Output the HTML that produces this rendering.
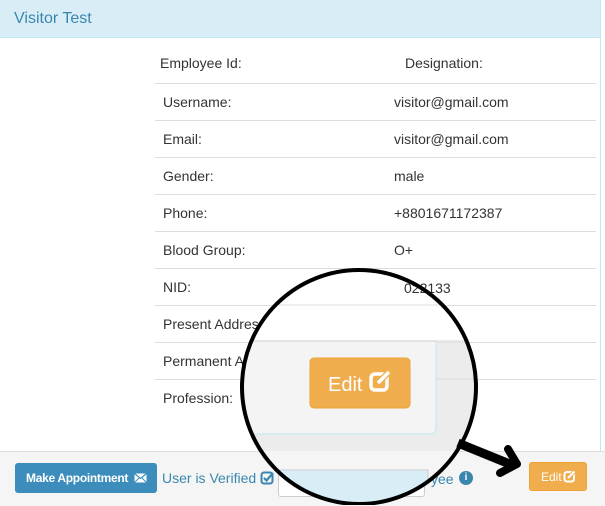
<!DOCTYPE html>
<html><head><style>
body{margin:0;width:605px;height:505px;overflow:hidden;background:#fff;font-family:"Liberation Sans",sans-serif;position:relative}
.hdr{position:absolute;left:0;top:0;width:600px;height:37px;background:#d9edf7;border-bottom:1px solid #bce8f1;border-right:1px solid #bce8f1;}
.hdr span{position:absolute;left:14px;top:10px;font-size:16px;color:#3a87ad}
.rb{position:absolute;left:600px;top:37px;width:1px;height:414px;background:#bce8f1}
.t{position:absolute;font-size:14px;color:#333}
.ln{position:absolute;left:155px;width:441px;height:1px;background:#ddd}
.ft{position:absolute;left:0;top:451px;width:605px;height:54px;background:#f5f5f5;border-top:1px solid #ddd}
</style></head><body>
<div class="hdr"><span>Visitor Test</span></div>
<div class="rb"></div>
<div class="t" style="left:160px;top:55px">Employee Id:</div>
<div class="t" style="left:405px;top:55px">Designation:</div>
<div class="ln" style="top:83px"></div>
<div class="t" style="left:163px;top:94px">Username:</div><div class="t" style="left:394px;top:94px">visitor@gmail.com</div>
<div class="ln" style="top:120px"></div>
<div class="t" style="left:163px;top:131px">Email:</div><div class="t" style="left:394px;top:131px">visitor@gmail.com</div>
<div class="ln" style="top:157px"></div>
<div class="t" style="left:163px;top:168px">Gender:</div><div class="t" style="left:394px;top:168px">male</div>
<div class="ln" style="top:194px"></div>
<div class="t" style="left:163px;top:205px">Phone:</div><div class="t" style="left:394px;top:205px">+8801671172387</div>
<div class="ln" style="top:231px"></div>
<div class="t" style="left:163px;top:242px">Blood Group:</div><div class="t" style="left:394px;top:242px">O+</div>
<div class="ln" style="top:268px"></div>
<div class="t" style="left:163px;top:279px">NID:</div>
<div class="ln" style="top:305px"></div>
<div class="t" style="left:163px;top:316px">Present Address:</div>
<div class="ln" style="top:342px"></div>
<div class="t" style="left:163px;top:353px">Permanent Address:</div>
<div class="ln" style="top:379px"></div>
<div class="t" style="left:163px;top:390px">Profession:</div>
<div class="ft"></div>
<div style="position:absolute;left:15px;top:463px;width:142px;height:30px;background:#3c8dbc;border-radius:3px;color:#fff;font-size:12px;font-weight:bold;line-height:30px;text-align:left;padding-left:11px;box-sizing:border-box;letter-spacing:-0.3px">Make Appointment</div>
<svg style="position:absolute;left:134px;top:473px" width="13" height="10"><rect x="0.5" y="0.5" width="12" height="9" fill="#fff"/><polyline points="0.5,0.5 6.5,5.5 12.5,0.5" fill="none" stroke="#3c8dbc" stroke-width="1.2"/><line x1="0.5" y1="9.5" x2="5" y2="5" stroke="#3c8dbc"/><line x1="12.5" y1="9.5" x2="8" y2="5" stroke="#3c8dbc"/></svg>
<div class="t" style="left:162px;top:470px;color:#3a87ad">User is Verified</div>
<svg style="position:absolute;left:260px;top:471px" width="14" height="14"><rect x="1.5" y="1.5" width="11" height="11" rx="2.5" fill="none" stroke="#3a87ad" stroke-width="2"/><polyline points="4,7 6.5,9.5 13,2" fill="none" stroke="#3a87ad" stroke-width="2.2"/></svg>
<div style="position:absolute;left:278px;top:470px;width:145px;height:25px;background:#fff;border:1px solid #ccc;border-radius:3px"></div>
<div style="position:absolute;left:459px;top:471px;width:14px;height:14px;border-radius:50%;background:#3a87ad;color:#fff;font-size:10px;text-align:center;line-height:14px;font-weight:bold">i</div>
<div style="position:absolute;left:529px;top:462px;width:58px;height:29px;background:#f0ad4e;border:1px solid #eea236;border-radius:3px;color:#fff;font-size:12px;line-height:28px;padding-left:11px;box-sizing:border-box">Edit</div>
<svg style="position:absolute;left:563px;top:470px" width="13" height="13"><rect x="1.5" y="2" width="9.5" height="9.5" rx="2.5" fill="none" stroke="#fff" stroke-width="2"/><line x1="5" y1="8" x2="12" y2="1" stroke="#f0ad4e" stroke-width="4"/><line x1="5" y1="8" x2="11.5" y2="1.5" stroke="#fff" stroke-width="2"/></svg>
<svg style="position:absolute;left:0;top:0" width="605" height="505">
<defs><clipPath id="c"><circle cx="359" cy="387" r="117"/></clipPath></defs>
<g clip-path="url(#c)">
<rect x="230" y="260" width="260" height="250" fill="#ececec"/>
<rect x="200" y="260" width="236" height="174" rx="5" fill="#f4f4f4" stroke="#bce8f1"/>
<rect x="200" y="260" width="236" height="80" fill="#fff"/>
<rect x="436" y="260" width="60" height="80" fill="#fff"/>
<line x1="200" y1="341" x2="436" y2="341" stroke="#ddd" stroke-width="1.5"/>
<line x1="200" y1="305" x2="480" y2="305" stroke="#ddd"/>
<line x1="436" y1="342" x2="480" y2="342" stroke="#ddd"/>
<line x1="436" y1="379" x2="480" y2="379" stroke="#ddd"/>
<rect x="310" y="358" width="100" height="50" rx="4" fill="#f0ad4e" stroke="#eea236"/>
<text x="328" y="391" font-size="20" fill="#fff" font-family="Liberation Sans">Edit</text>
<rect x="371" y="374" width="16" height="16" rx="4" fill="none" stroke="#fff" stroke-width="3.5"/>
<line x1="378" y1="383" x2="391" y2="370" stroke="#f0ad4e" stroke-width="6"/>
<line x1="378" y1="383" x2="389" y2="372" stroke="#fff" stroke-width="3.5"/>
<rect x="230" y="451" width="260" height="60" fill="#f5f5f5"/>
<rect x="278" y="470" width="150" height="40" fill="#d9edf7" stroke="#ccc"/>
</g>
<text x="404" y="293" font-size="14" fill="#333" font-family="Liberation Sans">022133</text>
<text x="431" y="484" font-size="14" fill="#3a87ad" font-family="Liberation Sans">yee</text>
<circle cx="359" cy="387" r="117" fill="none" stroke="#000" stroke-width="4"/>
<line x1="458" y1="443" x2="512" y2="465" stroke="#000" stroke-width="9"/>
<polyline points="508,449 517,464 500,473" fill="none" stroke="#000" stroke-width="8" stroke-linejoin="round" stroke-linecap="round"/>
</svg>
</body></html>
